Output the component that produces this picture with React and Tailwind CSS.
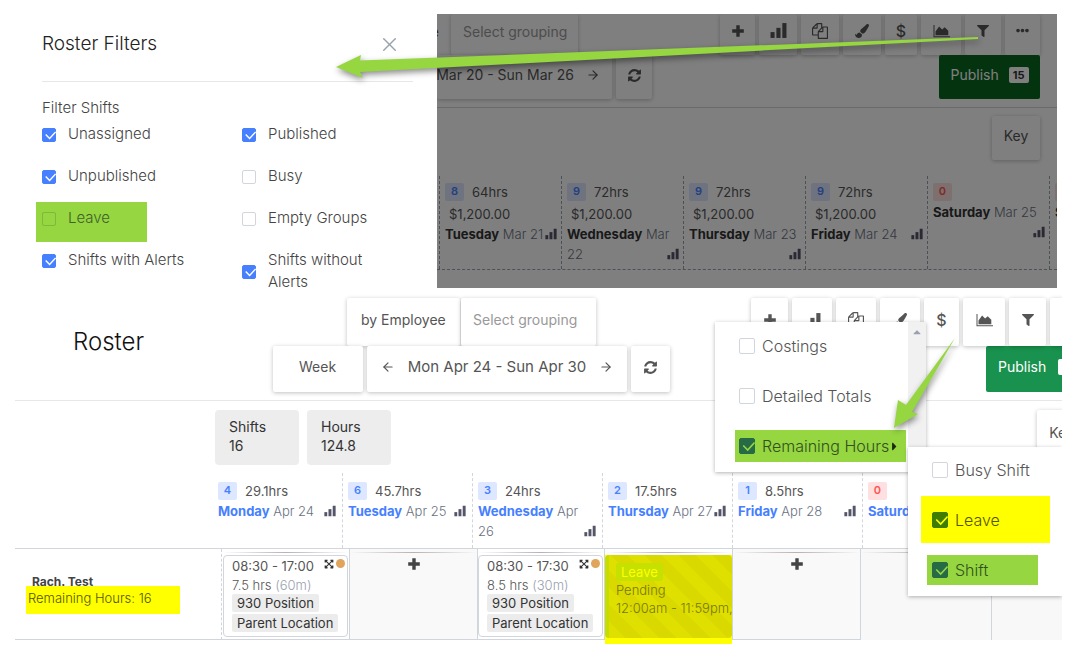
import clsx from 'clsx';
import { X, ArrowLeft, ArrowRight } from 'lucide-react';
import { FaPaintBrush, FaFilter, FaEllipsisH, FaExpandArrowsAlt, FaCaretRight, FaCaretUp } from 'react-icons/fa';

const PlusIcon = ({ size = 14 }) => (
  <svg width={size} height={size} viewBox="0 0 14 14" fill="currentColor"><path d="M5.3 1.2h3.4v4.1h4.1v3.4H8.7v4.1H5.3V8.7H1.2V5.3h4.1z" /></svg>
);

const BarsIcon = ({ size = 17 }) => (
  <svg width={size} height={size} viewBox="0 0 16 16" fill="currentColor">
    <rect x="0.5" y="9.5" width="3.8" height="5.5" /><rect x="6" y="5.5" width="3.9" height="9.5" /><rect x="11.6" y="1" width="3.9" height="14" />
  </svg>
);

const FilesIcon = () => (
  <svg width="16" height="16" viewBox="0 0 1792 1792" fill="currentColor">
    <path d="M1696 384q40 0 68 28t28 68v1216q0 40-28 68t-68 28h-960q-40 0-68-28t-28-68v-288h-544q-40 0-68-28t-28-68v-672q0-40 20-88t48-76l408-408q28-28 76-48t88-20h416q40 0 68 28t28 68v328q68-40 128-40h416zm-544 213l-299 299h299v-299zm-640-384l-299 299h299v-299zm196 647l316-316v-416h-384v416q0 40-28 68t-68 28h-416v640h512v-256q0-40 20-88t48-76zm956 804v-1152h-384v416q0 40-28 68t-68 28h-416v640h896z" />
  </svg>
);

const RefreshIcon = () => (
  <svg width="15" height="15" viewBox="0 0 1792 1792" fill="currentColor">
    <path d="M1639 1056q0 5-1 7-64 268-268 434.5t-478 166.5q-146 0-282.5-55t-243.5-157l-129 129q-19 19-45 19t-45-19-19-45v-448q0-26 19-45t45-19h448q26 0 45 19t19 45-19 45l-137 137q71 66 161 102t187 36q134 0 250-65t186-179q11-17 53-117 8-23 30-23h192q13 0 22.5 9.5t9.5 22.5zm25-800v448q0 26-19 45t-45 19h-448q-26 0-45-19t-19-45 19-45l138-138q-148-137-349-137-134 0-250 65t-186 179q-11 17-53 117-8 23-30 23h-199q-13 0-22.5-9.5t-9.5-22.5v-7q65-268 270-434.5t480-166.5q146 0 284 55.5t245 156.5l130-129q19-19 45-19t45 19 19 45z" />
  </svg>
);

const AreaIcon = () => (
  <svg width="17" height="14" viewBox="0 0 17 14" fill="currentColor">
    <path d="M.5 1h1v11.3H17v1H.5z" /><path d="M2.5 11.3V7.5l3.6-5 3 3 2.6-2.3 3.6 3.6v4.5z" />
  </svg>
);

const DollarIcon = () => <span className="text-base leading-none font-medium">$</span>;

const TOOLS = [
  { name: 'Add', icon: <PlusIcon />, small: 'w-[35px]', large: 'w-[37px]' },
  { name: 'Stats', icon: <BarsIcon />, small: 'w-[38px]', large: 'w-10' },
  { name: 'Copy', icon: <FilesIcon />, small: 'w-[38px]', large: 'w-10' },
  { name: 'Colours', icon: <FaPaintBrush size={14} />, small: 'w-[38px]', large: 'w-10' },
  { name: 'Costs', icon: <DollarIcon />, small: 'w-8', large: 'w-[35px]' },
  { name: 'Charts', icon: <AreaIcon />, small: 'w-10', large: 'w-[42px]' },
  { name: 'Filter', icon: <FaFilter size={12} />, small: 'w-[36px]', large: 'w-[37px]' },
  { name: 'More', icon: <FaEllipsisH size={13} />, small: 'w-[35px]', large: 'w-[37px]' },
];

const FILTERS = [
  { label: 'Unassigned', checked: true },
  { label: 'Published', checked: true },
  { label: 'Unpublished', checked: true },
  { label: 'Busy' },
  { label: 'Leave', marked: true },
  { label: 'Empty Groups' },
  { label: 'Shifts with Alerts', checked: true },
  { label: 'Shifts without Alerts', checked: true },
];

const MARCH = [
  { count: 8, hours: '64hrs', cost: '$1,200.00', day: 'Tuesday', date: 'Mar 21' },
  { count: 9, hours: '72hrs', cost: '$1,200.00', day: 'Wednesday', date: 'Mar 22' },
  { count: 9, hours: '72hrs', cost: '$1,200.00', day: 'Thursday', date: 'Mar 23' },
  { count: 9, hours: '72hrs', cost: '$1,200.00', day: 'Friday', date: 'Mar 24' },
  { count: 0, day: 'Saturday', date: 'Mar 25' },
  { count: 0, day: 'Sunday', date: 'Mar 26' },
];

const APRIL = [
  { count: 4, hours: '29.1hrs', day: 'Monday', date: 'Apr 24' },
  { count: 6, hours: '45.7hrs', day: 'Tuesday', date: 'Apr 25' },
  { count: 3, hours: '24hrs', day: 'Wednesday', date: 'Apr 26' },
  { count: 2, hours: '17.5hrs', day: 'Thursday', date: 'Apr 27' },
  { count: 1, hours: '8.5hrs', day: 'Friday', date: 'Apr 28' },
  { count: 0, day: 'Saturday', date: 'Apr 29' },
];

const boxClass = 'bg-white rounded-xs shadow-[0_1px_4px_rgba(0,0,0,0.25)] shrink-0 text-[#555]';

function Checkbox({ checked, tone = 'blue', className }) {
  const tones = {
    blue: 'border-gray-300 bg-white checked:border-[#4680ff] checked:bg-[#4680ff]',
    green: 'border-[#7fb83a] checked:border-[#276b46] checked:bg-[#276b46]',
    yellow: 'border-[#3f7d00] checked:bg-[#3f7d00]',
  };
  return (
    <span className={clsx('relative inline-flex shrink-0', className)}>
      <input type="checkbox" defaultChecked={checked} className={clsx('peer size-full appearance-none rounded-xs border', tones[tone])} />
      <svg viewBox="0 0 14 14" fill="none" strokeWidth="1.4"
        className={clsx('pointer-events-none absolute inset-0 hidden size-full peer-checked:block', tone === 'blue' && 'stroke-white', tone === 'green' && 'stroke-[#95d641]', tone === 'yellow' && 'stroke-[#ffff00]')}>
        <path d="M3.7 6.6l3.9 3.9L13.6 4" />
      </svg>
    </span>
  );
}

function Toolbar({ large }) {
  return (
    <div className="flex gap-1">
      {TOOLS.map(t => (
        <button key={t.name} aria-label={t.name}
          className={clsx(boxClass, 'flex justify-center text-[#3a3a3a]', large ? `h-12 items-center pb-1 ${t.large}` : `h-[41px] items-center pb-2 ${t.small}`)}>
          {t.icon}
        </button>
      ))}
    </div>
  );
}

function DayHeader({ item, className, dayClass }) {
  return (
    <th className={clsx('shrink-0 border-r border-dashed pl-[5px] text-left text-[13px] leading-5 font-light text-gray-500', className)}>
      <div className="flex h-5 items-center gap-2">
        <span className={clsx('flex h-[18px] w-[19px] justify-center rounded-xs text-[11px] leading-4 font-semibold', item.count ? 'bg-[#dde7ff] text-[#4680ff]' : 'bg-[#ffe0e0] text-[#f55]')}>{item.count}</span>
        {item.hours && <span className="font-normal text-[#555]">{item.hours}</span>}
      </div>
      {item.cost && <div className="pt-0.5 pl-1 font-normal text-[#555]">{item.cost}</div>}
      <div>
        <span className={clsx('font-bold', dayClass)}>{item.day}</span> {item.date}
        <span className="float-right pt-1 text-[#55556a]"><BarsIcon size={12} /></span>
      </div>
    </th>
  );
}

function FiltersPanel() {
  return (
    <aside className="w-[437px] shrink-0 overflow-hidden pr-6 pl-[42px] font-light text-[#444]">
      <div className="flex h-[68px] items-center justify-between border-b border-gray-200 pr-3 pb-1.5">
        <h2 className="text-[19px] text-[#222]">Roster Filters</h2>
        <button aria-label="Close" className="text-gray-400"><X size={23} strokeWidth={1.5} /></button>
      </div>
      <p className="pt-3.5 text-[15px] leading-6">Filter Shifts</p>
      <div className="grid auto-rows-[42px] grid-cols-[200px_1fr] pt-[3px] text-[15px] leading-[22px]">
        {FILTERS.map(f => (
          <label key={f.label}
            className={clsx('flex items-start gap-3', f.marked && '-mt-[5px] -ml-1.5 h-10 w-[111px] bg-[#95d641] pt-[5px] pl-1.5 text-[#41612b]')}>
            <Checkbox checked={f.checked} tone={f.marked ? 'green' : 'blue'} className={clsx('size-3.5', f.label === 'Shifts without Alerts' ? 'mt-4' : 'mt-[5px]')} />
            <span className="max-w-[125px]">{f.label}</span>
          </label>
        ))}
      </div>
    </aside>
  );
}

function DimmedRoster() {
  return (
    <section className="relative h-[274px] min-w-0 flex-1 overflow-hidden text-sm">
      <div className="flex justify-between pr-[17px]">
        <div className="flex">
          <div className="flex w-3.5 justify-end overflow-hidden pr-3">
            <button className="h-9 shrink-0 text-[#555]">by Employee</button>
          </div>
          <select aria-label="Grouping" className={clsx(boxClass, 'h-[41px] w-[127px] appearance-none pb-1.5 pl-3 text-[#999]')}>
            <option>Select grouping</option>
          </select>
        </div>
        <Toolbar />
      </div>
      <div className="flex h-[53px] justify-between border-b border-gray-300 pr-[17px]">
        <div className="flex gap-1">
          <div className={clsx(boxClass, 'flex h-11 w-[175px] items-center justify-end gap-3 overflow-hidden pr-3 pb-1 whitespace-nowrap')}>
            <span className="shrink-0">Mon Mar 20 - Sun Mar 26</span>
            <ArrowRight size={14} className="shrink-0" />
          </div>
          <button aria-label="Refresh" className={clsx(boxClass, 'flex h-11 w-[36px] items-center justify-center pb-1')}><RefreshIcon /></button>
        </div>
        <button className="flex h-11 w-[101px] items-center justify-center gap-2.5 rounded-xs bg-[#08661f] pb-1 text-white">
          Publish <span className="rounded-xs bg-white px-1 text-[11px] leading-4 font-bold text-[#333]">15</span>
        </button>
      </div>
      <div className="flex h-[68px] justify-end pt-2 pr-[17px]">
        <button className={clsx(boxClass, 'h-11 w-12 pb-1')}>Key</button>
      </div>
      <table className="block">
        <thead className="block">
          <tr className="flex h-[94px] border-b border-dashed border-gray-400">
            <th className="w-[3px] shrink-0 border-r border-dashed border-gray-400" />
            {MARCH.map(d => <DayHeader key={d.day} item={d} dayClass="text-[#333]" className="w-[122px] border-gray-400 pt-1.5 pr-1" />)}
          </tr>
        </thead>
      </table>
      <div className="absolute inset-0 bg-black/50" />
    </section>
  );
}

function ShiftCard({ time, length, rest }) {
  return (
    <div className="h-[82px] w-[125px] rounded-sm border border-gray-300 bg-white pl-2 text-[13px] leading-[18px] text-[#555] whitespace-nowrap">
      <div className="flex h-5 items-center">
        {time}
        <span className="ml-auto flex gap-0.5 pr-0.5 pb-1 text-[#333]"><FaExpandArrowsAlt size={10} /><i className="size-[9px] rounded-full bg-[#e0a45c]" /></span>
      </div>
      <div className="font-light">{length} <span className="text-gray-400">({rest})</span></div>
      <div className="flex flex-col items-start gap-0.5 text-[#333]">
        <span className="rounded-xs bg-[#ececec] px-[5px]">930 Position</span>
        <span className="rounded-xs bg-[#ececec] px-[5px]">Parent Location</span>
      </div>
    </div>
  );
}

function Cell({ children, className }) {
  return (
    <td className={clsx('shrink-0 border-r border-gray-300 p-0', className)}>
      <div className="mt-[3px] mb-0.5 h-px bg-linear-to-r from-transparent via-[#bbb0b0] to-transparent" />
      {children}
    </td>
  );
}

function CostsMenu() {
  return (
    <>
      <div className="absolute top-6 right-[136px] z-10 h-[150px] w-[211px] bg-white text-base text-[#555] shadow-[0_1px_4px_rgba(0,0,0,0.3)]">
        <div className="absolute top-0 right-0 flex h-[125px] w-[18px] justify-center bg-[#f1f1f1] pt-1 text-gray-400"><FaCaretUp size={12} /></div>
        <div className="flex flex-col pt-2 pl-5 font-light">
          <label className="flex h-8 items-center gap-[7px] pl-1"><Checkbox className="size-4" />Costings</label>
          <label className="mt-[18px] flex h-8 items-center gap-[7px] pl-1"><Checkbox className="size-4" />Detailed Totals</label>
          <label className="mt-[18px] flex h-8 w-[171px] items-center gap-[7px] bg-[#95d641] pl-1 whitespace-nowrap text-[#33501f]">
            <Checkbox checked tone="green" className="size-4" />Remaining Hours<FaCaretRight size={13} className="-ml-2 text-[#1c2b10]" />
          </label>
        </div>
      </div>
      <div className="absolute top-[149px] right-0 z-10 h-[149px] w-[154px] bg-white pt-[7px] pl-[13px] text-base font-light text-[#555] shadow-[0_1px_4px_rgba(0,0,0,0.3)]">
        <label className="flex h-8 items-center gap-[7px] pl-[11px]"><Checkbox className="size-4" />Busy Shift</label>
        <label className="mt-2.5 flex h-[47px] w-[129px] items-center gap-[7px] bg-[#ffff00] pl-[11px] text-[#555500]"><Checkbox checked tone="yellow" className="size-4" />Leave</label>
        <label className="mt-3 ml-1.5 flex h-[30px] w-[111px] items-center gap-[7px] bg-[#95d641] pl-[5px] text-[#33501f]"><Checkbox checked tone="green" className="size-4" />Shift</label>
      </div>
    </>
  );
}

function Roster() {
  return (
    <section className="relative mt-2.5 mr-2 ml-[15px] overflow-x-clip text-sm">
      <header className="flex h-[103px] border-b border-gray-200">
        <h1 className="w-[258px] shrink-0 pt-7 pl-[58px] text-2xl font-light text-[#111]">Roster</h1>
        <div>
          <div className="flex h-12 gap-px pl-[74px]">
            <select aria-label="View" className={clsx(boxClass, 'w-[113px] appearance-none pb-1 pl-3.5')}><option>by Employee</option></select>
            <select aria-label="Grouping" className={clsx(boxClass, 'w-[135px] appearance-none pb-1 pl-3 text-[#999]')}><option>Select grouping</option></select>
          </div>
          <div className="relative flex h-[46px] gap-1">
            <select aria-label="Period" className={clsx(boxClass, 'w-[90px] appearance-none pb-1 pl-[26px]')}><option>Week</option></select>
            <div className={clsx(boxClass, 'flex w-[260px] items-center justify-between px-3.5 pb-1 text-[15px] whitespace-nowrap')}>
              <ArrowLeft size={14} /> Mon Apr 24 - Sun Apr 30 <ArrowRight size={14} />
            </div>
            <button aria-label="Refresh" className={clsx(boxClass, 'flex w-[39px] items-center justify-center pb-1')}><RefreshIcon /></button>
          </div>
        </div>
        <div className="ml-auto w-[311px] shrink-0">
          <Toolbar large />
          <button className="ml-[235px] flex h-[46px] w-[110px] items-center gap-3 rounded-xs bg-[#18924e] pb-1 pl-3 text-white">
            Publish <span className="rounded-xs bg-white px-1 text-[11px] leading-4 font-bold text-[#333]">15</span>
          </button>
        </div>
      </header>

      <div className="flex h-[72px] gap-2 pt-[9px] pl-[200px] text-sm leading-[19px] text-[#333]">
        <div className="h-[55px] w-[84px] rounded-sm bg-[#ededed] px-3.5 py-[7px]">Shifts<br />16</div>
        <div className="h-[55px] w-[84px] rounded-sm bg-[#ededed] px-3.5 py-[7px]">Hours<br />124.8</div>
        <button className={clsx(boxClass, '-mr-6 ml-auto h-11 w-[49px]')}>Key</button>
      </div>

      <table className="block">
        <thead className="block">
          <tr className="flex h-[76px] border-b border-gray-300 pl-[198px]">
            {APRIL.map(d => <DayHeader key={d.day} item={d} dayClass="text-[#4680ff]" className="w-[130px] border-gray-300 pt-2 pr-1.5" />)}
          </tr>
        </thead>
        <tbody className="block">
          <tr className="flex h-[91px]">
            <th className="w-[207px] shrink-0 border-r border-b border-dashed border-gray-300 px-[11px] pt-[26px] text-left text-[13px] text-[#444] [border-bottom-style:solid]">
              <div className="h-[11px] overflow-hidden pl-1.5 text-xs leading-[14px] font-bold">Rach. Test</div>
              <div className="h-7 w-[154px] bg-[#ffff00] pl-0.5 leading-6 font-light text-[#555500]">Remaining Hours: 16</div>
            </th>
            <Cell className="w-32 border-b pl-px"><ShiftCard time="08:30 - 17:00" length="7.5 hrs" rest="60m" /></Cell>
            <Cell className="w-32 border-b bg-[#f9f9f9]"><button aria-label="Add shift" className="mx-auto mt-1 block text-[#444]"><PlusIcon /></button></Cell>
            <Cell className="w-[127px] border-b"><ShiftCard time="08:30 - 17:30" length="8.5 hrs" rest="30m" /></Cell>
            <Cell className="w-32 border-b">
              <div className="h-[89px] bg-[#ffff00]">
                <div className="h-[83px] rounded-sm border-l-4 border-[#c6dd00] bg-[repeating-linear-gradient(45deg,#e0e000_0_12px,#d9d900_12px_24px)] pt-2 pl-[7px] text-[13px] leading-[18px] whitespace-nowrap text-[#77770a]">
                  <span className="inline-block rounded-xs bg-[#c6e000] px-[5px] text-[#ffff00]">Leave</span>
                  <div className="font-light">Pending</div>
                  <div className="font-light">12:00am - 11:59pm,</div>
                </div>
              </div>
            </Cell>
            <Cell className="w-32 border-b bg-[#f9f9f9]"><button aria-label="Add shift" className="mx-auto mt-1 block text-[#444]"><PlusIcon /></button></Cell>
            <Cell className="w-[131px] bg-[#f8f8f8]" />
            <Cell className="w-32 bg-[#f8f8f8]" />
          </tr>
        </tbody>
      </table>

      <CostsMenu />
    </section>
  );
}

export default function App() {
  return (
    <main className="relative overflow-hidden bg-white pt-3.5 pb-2 font-['Inter',sans-serif]">
      <div className="flex h-[274px] pr-[13px]">
        <FiltersPanel />
        <DimmedRoster />
      </div>
      <Roster />
      <svg width="1070" height="450" viewBox="0 0 1070 450" className="pointer-events-none absolute top-0 left-0 z-20 fill-[#95d641] drop-shadow-[1px_3px_3px_rgba(0,0,0,0.45)]">
        <path d="M336 67L361 55L360 60.500L978 37V39L360 72L363 78z" />
        <path d="M894 428L898 400L906 405L955 338L912 412L918 414z" />
      </svg>
    </main>
  );
}
